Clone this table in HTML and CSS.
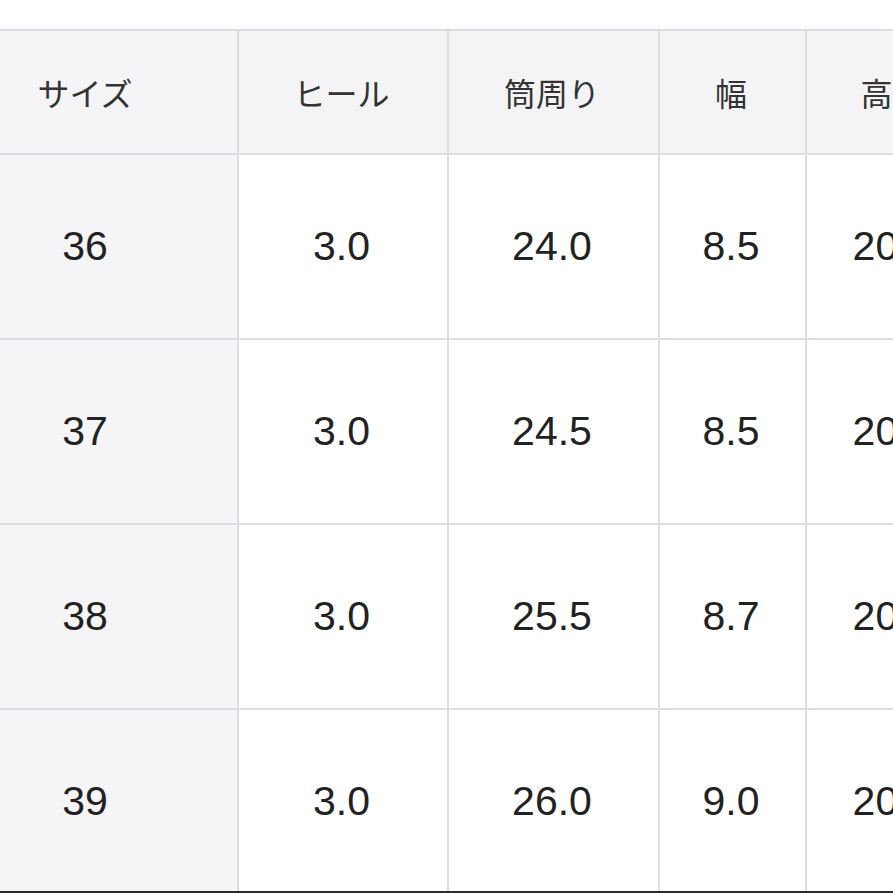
FILE: index.html
```html
<!DOCTYPE html>
<html lang="ja">
<head>
<meta charset="utf-8">
<title>サイズ表</title>
<link rel="stylesheet" href="styles.css">
</head>
<body>
<div class="page">
  <table class="size-table">
    <colgroup>
      <col class="c1"><col class="c2"><col class="c3"><col class="c4"><col class="c5">
    </colgroup>
    <thead>
      <tr>
        <th class="first">サイズ</th>
        <th>ヒール</th>
        <th>筒周り</th>
        <th>幅</th>
        <th>高さ</th>
      </tr>
    </thead>
    <tbody>
      <tr><td class="first">36</td><td>3.0</td><td>24.0</td><td>8.5</td><td>20.0</td></tr>
      <tr><td class="first">37</td><td>3.0</td><td>24.5</td><td>8.5</td><td>20.0</td></tr>
      <tr><td class="first">38</td><td>3.0</td><td>25.5</td><td>8.7</td><td>20.0</td></tr>
      <tr><td class="first">39</td><td>3.0</td><td>26.0</td><td>9.0</td><td>20.0</td></tr>
    </tbody>
  </table>
</div>
</body>
</html>
```
FILE: styles.css
```css
html, body {
  margin: 0;
  padding: 0;
  background: #ffffff;
  overflow: hidden;
}

.page {
  width: 893px;
  height: 893px;
  box-sizing: border-box;
  padding-top: 29px;
  border-bottom: 2px solid #2a2a2c;
  overflow: hidden;
}

.size-table {
  table-layout: fixed;
  width: 983px;
  border-collapse: separate;
  border-spacing: 0;
  border-top: 2px solid #dcdde2;
}

.c1 { width: 239px; }
.c2 { width: 210px; }
.c3 { width: 211px; }
.c4 { width: 147px; }
.c5 { width: 176px; }

.size-table th,
.size-table td {
  box-sizing: border-box;
  padding: 0 3px 0 0;
  text-align: center;
  vertical-align: middle;
  border-right: 2px solid #dcdde2;
  border-bottom: 2px solid #dcdde2;
  white-space: nowrap;
}

.size-table th {
  height: 124px;
  background: #f4f4f6;
  color: #333333;
  font-family: "Noto Sans CJK JP", "Noto Sans", sans-serif;
  font-size: 32px;
  font-weight: 400;
}

.size-table td {
  height: 185px;
  background: #ffffff;
  color: #222222;
  font-family: "Liberation Sans", Arial, sans-serif;
  font-size: 41px;
}

.size-table .first {
  background: #f5f5f7;
  padding-right: 67px;
}
```
